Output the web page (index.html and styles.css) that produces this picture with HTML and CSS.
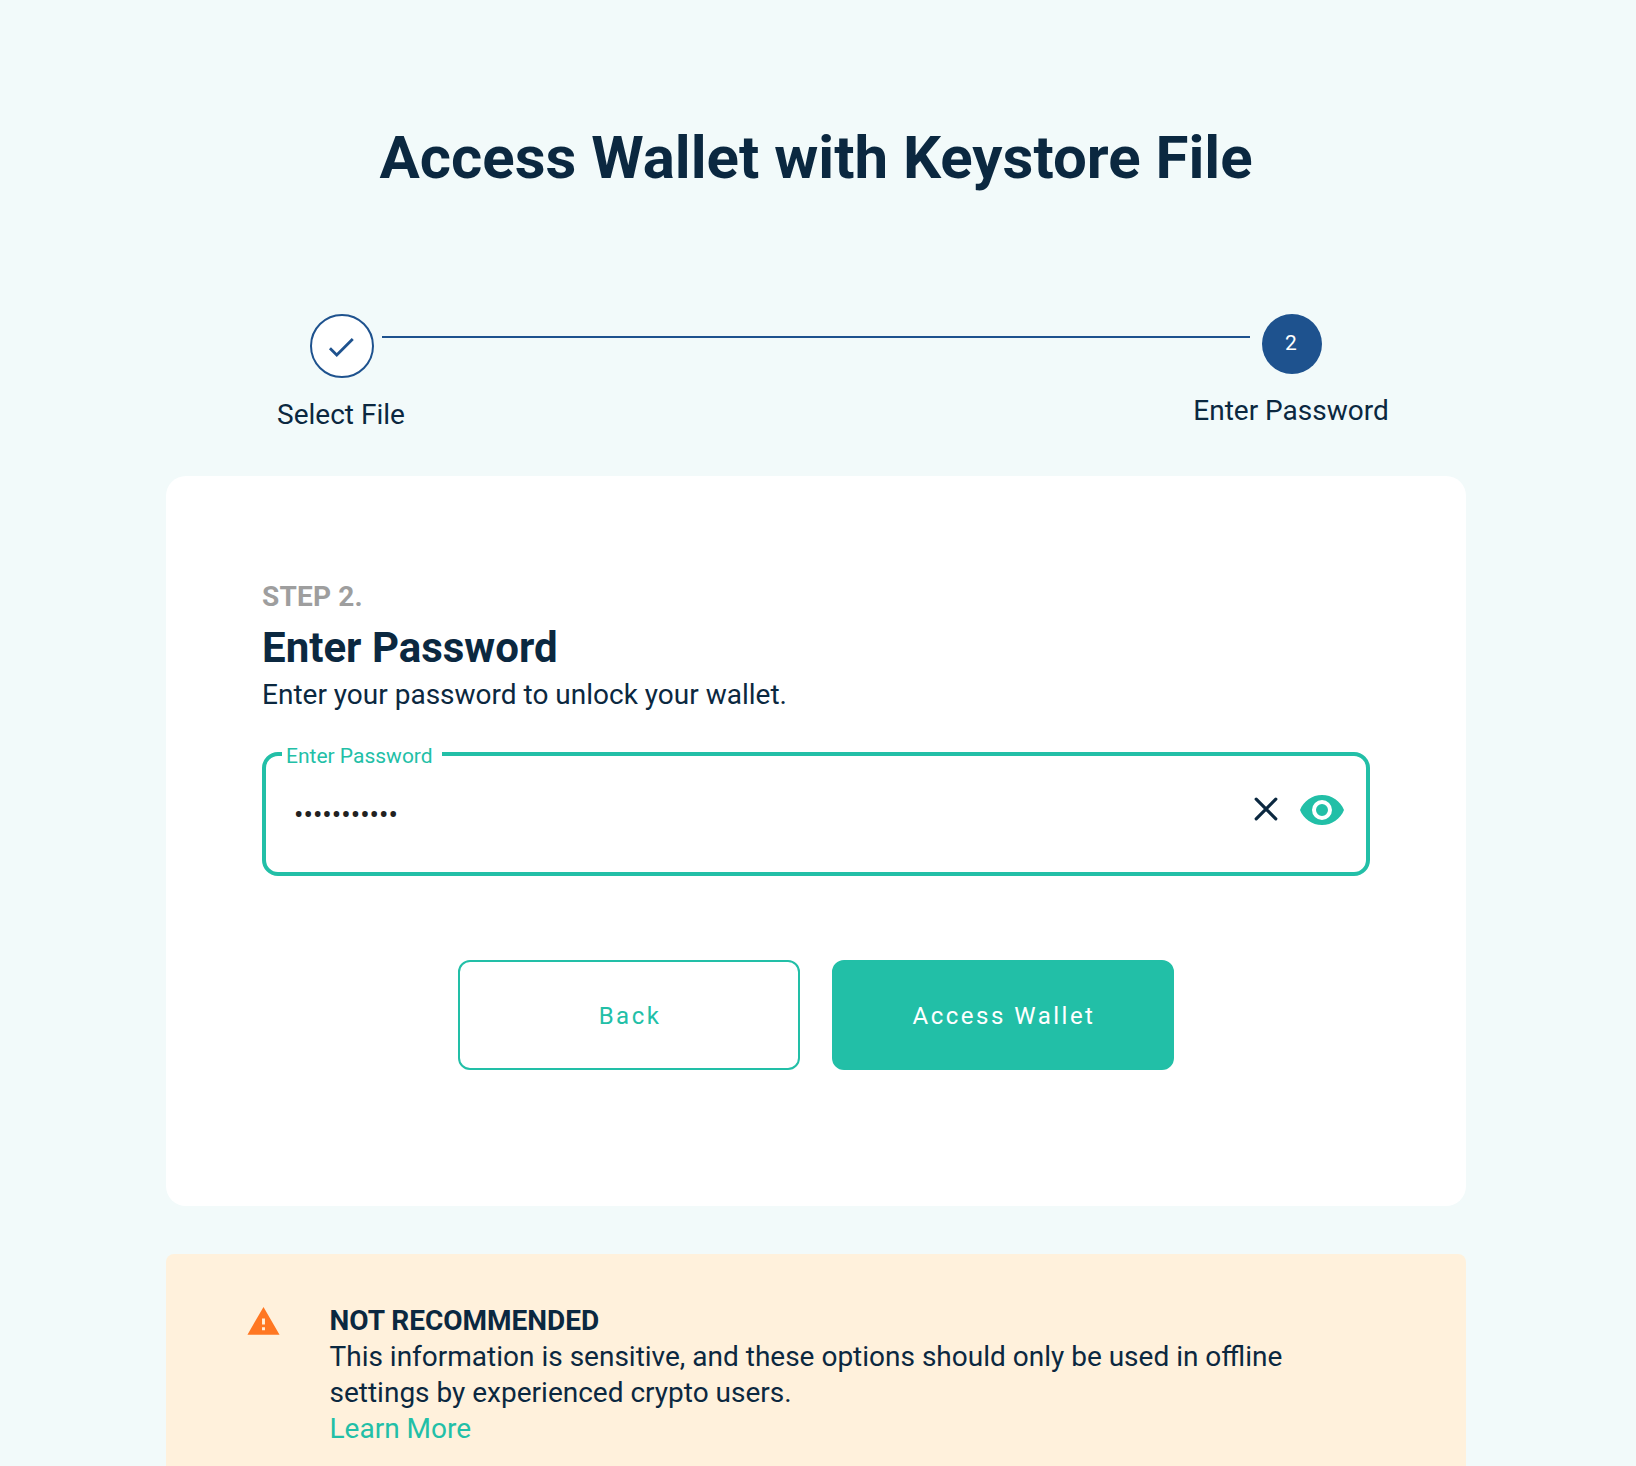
FILE: index.html
```html
<!DOCTYPE html>
<html lang="en">
<head>
<meta charset="utf-8">
<title>Access Wallet with Keystore File</title>
<link rel="stylesheet" href="styles.css">
</head>
<body>
<main class="page">
  <h1 class="title">Access Wallet with Keystore File</h1>

  <div class="stepper">
    <div class="step">
      <span class="step-dot step-dot-done">
        <svg width="34" height="34" viewBox="0 0 24 24"><path d="M21,7L9,19L3.5,13.5L4.91,12.09L9,16.17L19.59,5.59L21,7Z" fill="currentColor"/></svg>
      </span>
      <span class="step-label">Select File</span>
    </div>
    <div class="step-line"></div>
    <div class="step">
      <span class="step-dot step-dot-active">2</span>
      <span class="step-label">Enter Password</span>
    </div>
  </div>

  <section class="card">
    <div class="card-step">STEP 2.</div>
    <h2 class="card-title">Enter Password</h2>
    <p class="card-text">Enter your password to unlock your wallet.</p>

    <div class="field">
      <label class="field-label" for="password">Enter Password</label>
      <input class="field-input" id="password" type="password" value="password123">
      <svg class="icon-clear" width="24" height="24" viewBox="0 0 24 24"><path d="M2.2 2.2L21.8 21.8M21.8 2.2L2.2 21.8" stroke="currentColor" stroke-width="3.2" stroke-linecap="round"/></svg>
      <svg class="icon-eye" width="48" height="48" viewBox="0 0 24 24"><path d="M12,9A3,3 0 0,0 9,12A3,3 0 0,0 12,15A3,3 0 0,0 15,12A3,3 0 0,0 12,9M12,17A5,5 0 0,1 7,12A5,5 0 0,1 12,7A5,5 0 0,1 17,12A5,5 0 0,1 12,17M12,4.5C7,4.5 2.73,7.61 1,12C2.73,16.39 7,19.5 12,19.5C17,19.5 21.27,16.39 23,12C21.27,7.61 17,4.5 12,4.5Z" fill="currentColor"/></svg>
    </div>

    <div class="actions">
      <button class="btn btn-outline" type="button">Back</button>
      <button class="btn btn-solid" type="button">Access Wallet</button>
    </div>
  </section>

  <section class="alert">
    <svg class="alert-icon" width="35" height="35" viewBox="0 0 24 24"><path d="M1 21h22L12 2 1 21zm12-3h-2v-2h2v2zm0-4h-2v-4h2v4z" fill="currentColor"/></svg>
    <div class="alert-body">
      <strong>NOT RECOMMENDED</strong>
      <p>This information is sensitive, and these options should only be used in offline settings by experienced crypto users.</p>
      <a class="alert-link" href="#">Learn More</a>
    </div>
  </section>
</main>
</body>
</html>
```
FILE: styles.css
```css
* {
  box-sizing: border-box;
}

body {
  margin: 0;
  height: 1466px;
  overflow: hidden;
  background: #f2fafa;
  color: #0b2840;
  font-family: Roboto, sans-serif;
  font-size: 28px;
  line-height: 36px;
}

h1, h2, p {
  margin: 0;
}

.page {
  width: 1300px;
  margin-left: 166px;
  padding-top: 122px;
}

.title {
  font-size: 60px;
  line-height: 72px;
  font-weight: 700;
  text-align: center;
}

.stepper {
  display: flex;
  align-items: flex-start;
  height: 162px;
  margin-top: 120px;
  padding: 0 74px 0 76px;
}

.step {
  display: flex;
  flex: 0 0 200px;
  flex-direction: column;
  align-items: center;
}

.step-dot {
  display: flex;
  align-items: center;
  justify-content: center;
  border-radius: 50%;
}

.step-dot-done {
  width: 64px;
  height: 64px;
  padding: 1px 3px 0 0;
  border: 2px solid #1e528e;
  background: #fff;
  color: #1e528e;
}

.step-dot-active {
  width: 60px;
  height: 60px;
  padding: 0 2px 2px 0;
  background: #1e528e;
  color: #fff;
  font-size: 21px;
}

.step-label {
  margin: 19px 2px 0 0;
  white-space: nowrap;
}

.step-line {
  flex: 1;
  height: 2px;
  margin: 22px -58px 0 -60px;
  background: #1e528e;
}

.card {
  height: 730px;
  padding: 103px 96px 0;
  border-radius: 20px;
  background: #fff;
}

.card-step {
  color: #9e9e9e;
  font-weight: 700;
  letter-spacing: 0.2px;
}

.card-title {
  margin-top: 6px;
  font-size: 42px;
  line-height: 54px;
  font-weight: 700;
}

.card-text {
  margin-top: 2px;
}

.field {
  position: relative;
  display: flex;
  align-items: center;
  height: 124px;
  margin-top: 39px;
  padding: 0 20px 8px 28px;
  border: 4px solid #22bfa7;
  border-radius: 16px;
}

/* The floating label sits over the outline and cuts a notch in it. */
.field-label {
  position: absolute;
  top: -14px;
  left: 16px;
  width: 160px;
  padding-left: 4px;
  background: #fff;
  color: #22bfa7;
  font-size: 21px;
  line-height: 28px;
  white-space: nowrap;
}

.field-input {
  flex: 1;
  min-width: 0;
  height: 40px;
  margin-top: 8px;
  padding: 0;
  border: 0;
  outline: 0;
  background: transparent;
  color: #212121;
  font: inherit;
}

.icon-clear {
  margin: 0 20px 2px 0;
  color: #0b2840;
}

.icon-eye {
  color: #22bfa7;
}

.actions {
  display: flex;
  justify-content: center;
  gap: 32px;
  margin-top: 84px;
}

.btn {
  width: 342px;
  height: 110px;
  padding: 2px 0 0 2px;
  border: 2px solid #22bfa7;
  border-radius: 12px;
  font-family: inherit;
  font-size: 24px;
  letter-spacing: 2.5px;
}

.btn-outline {
  background: #fff;
  color: #22bfa7;
}

.btn-solid {
  background: #22bfa7;
  color: #fff;
}

.alert {
  display: flex;
  height: 260px;
  margin-top: 48px;
  padding: 49px 96px 0 80px;
  border-radius: 8px;
  background: #fff1dc;
}

.alert-icon {
  flex: none;
  margin: 0.5px 48.5px 0 0;
  color: #ff7722;
}

.alert-body strong {
  display: block;
  font-weight: 700;
}

.alert-body p {
  width: 980px;
}

.alert-link {
  color: #22bfa7;
  text-decoration: none;
}
```
